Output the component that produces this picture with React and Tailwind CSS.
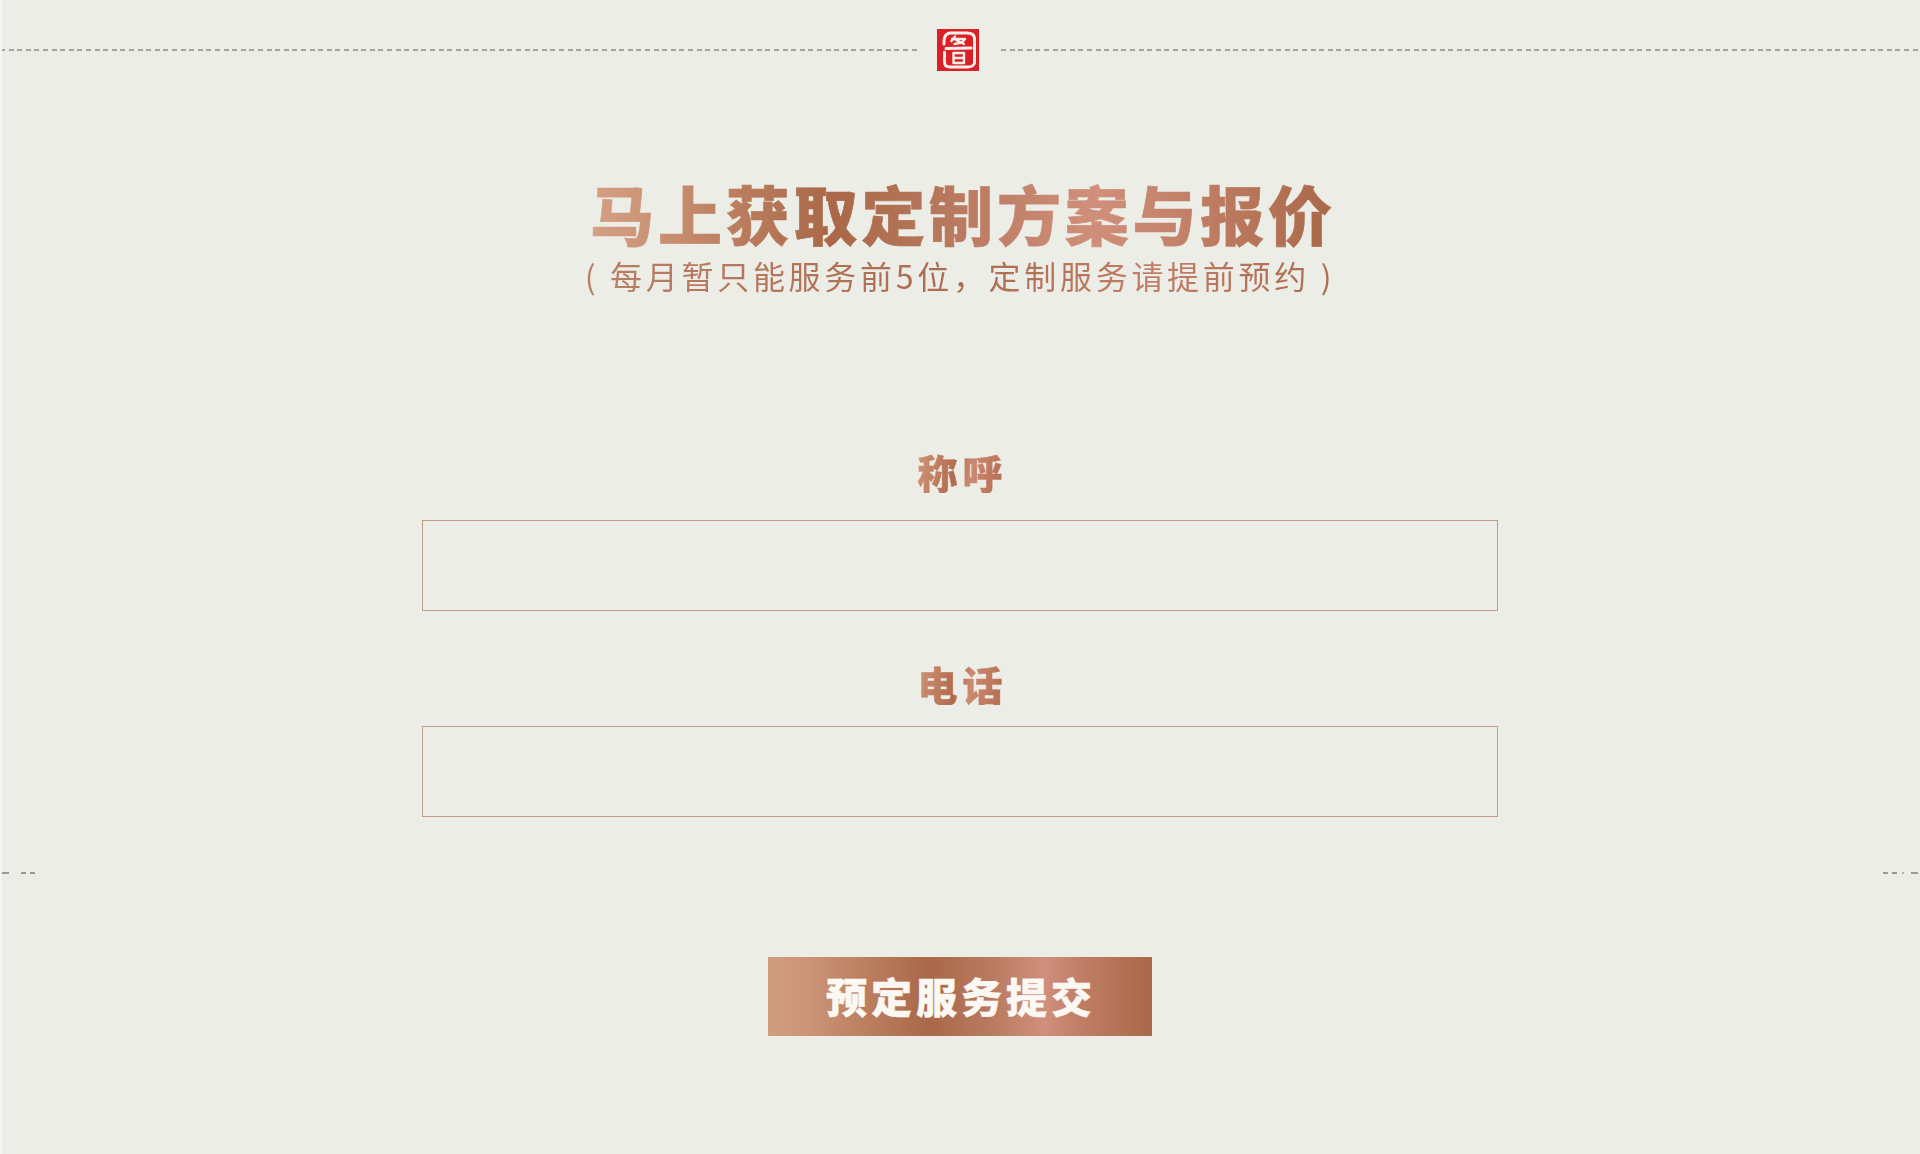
const cjk = "font-['Noto_Sans_CJK_SC','Liberation_Sans',sans-serif]";

const dashes = 'bg-[repeating-linear-gradient(90deg,#a3a39d_0,#a3a39d_5px,transparent_5px,transparent_8.6px)]';

const Seal = () => (
  <svg width="42" height="42" viewBox="0 0 42 42" className="shrink-0">
    <rect width="42" height="42" fill="#dc1f26" />
    <g fill="none" stroke="#f8efe9" strokeWidth="3" strokeLinecap="round" strokeLinejoin="round">
      <path d="M7 15c0-5 0-10 6-11h17c4 0 7 1 7.500 5v25c-.5 2-3 4-7 4H13c-4 0-5.500-2-5.500-5V23" />
      <path d="M18 7.500l-3.500 4.500M15 10h13l-3 3.500-7.500 1.500M19 11l8 4" strokeWidth="2.400" />
      <path d="M9 19.500l25-.5" />
      <path d="M16.500 24h10.500v10H16.500zM17 29h10" strokeWidth="2.400" />
    </g>
  </svg>
);

const Field = ({ label, labelGap }) => (
  <div className="flex flex-col items-center">
    <label className={`font-black text-[40px] leading-[42px] tracking-[5px] pl-[5px] [-webkit-text-stroke:0.5px_transparent] bg-[linear-gradient(100deg,#d39a7c_0%,#b26a4c_45%,#cc8a72_60%,#b0674a_100%)] bg-clip-text text-transparent ${labelGap}`}>
      {label}
    </label>
    <input className="w-[1076px] h-[91px] border border-[#c29b86] bg-transparent outline-none" />
  </div>
);

export default function App() {
  return (
    <div className={`${cjk} relative h-[1154px] w-full overflow-hidden bg-[#ecede7] border-l-2 border-[#f4f4f0]`}>
      {/* top seal divider */}
      <div className="flex items-center pt-[29px] -ml-[2px]">
        <div className={`h-[2px] flex-1 ${dashes}`} />
        <div className="ml-[18px] mr-[22px] flex">
          <Seal />
        </div>
        <div className={`h-[2px] flex-1 ${dashes}`} />
      </div>

      <div className="flex flex-col items-center pt-[103px] -ml-[2px]">
        <h1 className="font-black text-[64px] leading-[76px] tracking-[3.800px] pl-[6px] [-webkit-text-stroke:0.7px_transparent] bg-[linear-gradient(90deg,#d6a284_0%,#a96848_33%,#b97a5f_50%,#d08f7a_68%,#a96848_100%)] bg-clip-text text-transparent">
          马上获取定制方案与报价
        </h1>
        <p className="mt-[3px] font-normal text-[32px] leading-[44px] tracking-[3.700px] whitespace-pre bg-[linear-gradient(90deg,#b98066_0%,#ab6c4f_50%,#c07e66_75%,#ab6c4f_100%)] bg-clip-text text-transparent">
          {'( 每月暂只能服务前5位，定制服务请提前预约 )'}
        </p>

        <div className="mt-[154px] flex flex-col gap-[52px]">
          <Field label="称呼" labelGap="mb-[27px]" />
          <Field label="电话" labelGap="mb-[21px]" />
        </div>
      </div>

      {/* little side ticks */}
      <div className="mt-[55px] flex h-[2px] justify-between -ml-[2px]">
        <div className="ml-[2px] flex gap-[4px]">
          <span className="mr-[8px] w-[7px] bg-[#9a9a94]" />
          <span className="w-[5px] bg-[#9a9a94]" />
          <span className="w-[5px] bg-[#9a9a94]" />
        </div>
        <div className="mr-[2px] flex gap-[4px]">
          <span className="w-[5px] bg-[#9a9a94]" />
          <span className="w-[5px] bg-[#9a9a94]" />
          <span className="mx-[1px] w-[2px] bg-[#b5b5ae]" />
          <span className="ml-[2px] w-[7px] bg-[#9a9a94]" />
        </div>
      </div>

      <div className="flex justify-center pt-[83px] -ml-[2px]">
        <button className="flex h-[79px] w-[384px] items-center justify-center pb-[2px] pl-[2px] bg-[linear-gradient(90deg,#d19d7f_0%,#cc9477_10%,#a96848_42%,#b87a60_58%,#d08f7c_72%,#bf7d65_82%,#a96848_100%)] text-[41px] font-black tracking-[4px] [-webkit-text-stroke:0.4px_#fbf7f3] text-[#fbf7f3]">
          预定服务提交
        </button>
      </div>
    </div>
  );
}
